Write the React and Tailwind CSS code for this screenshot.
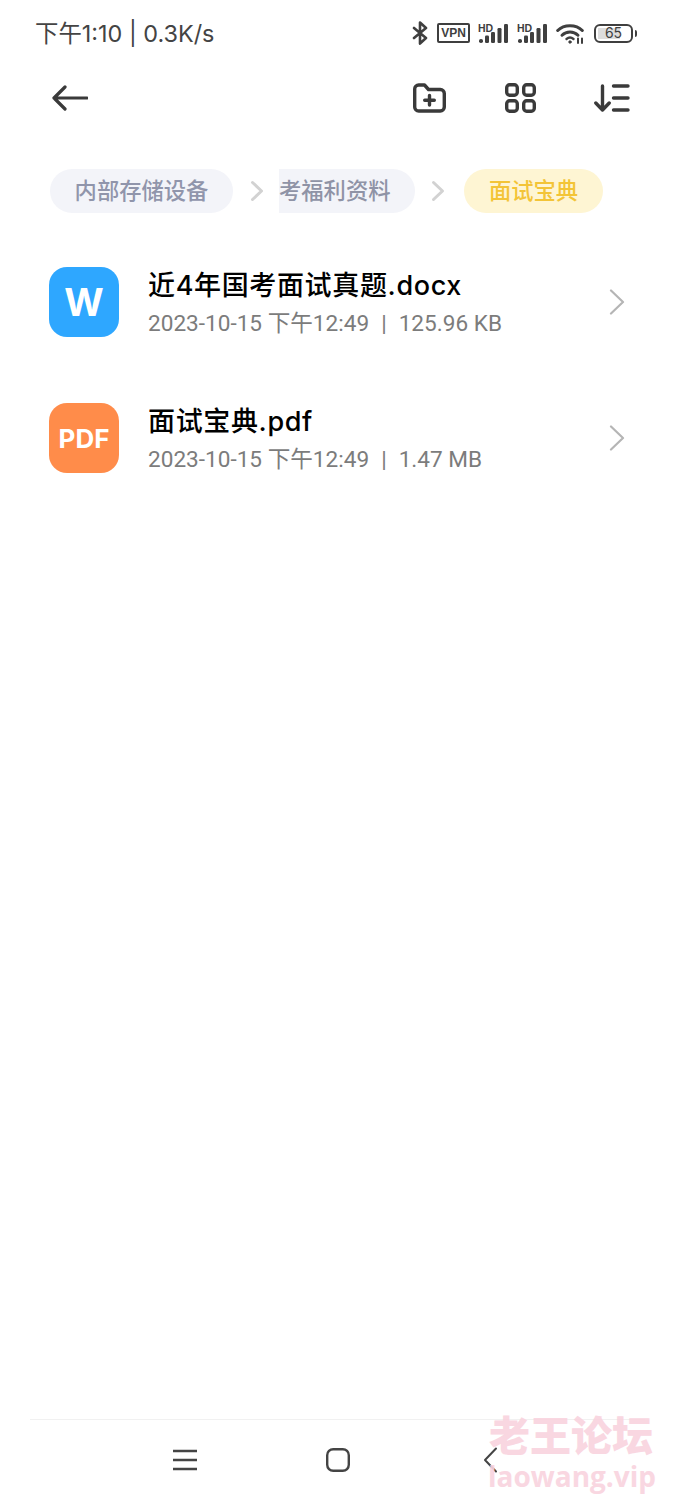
function Bluetooth() {
  return (
    <svg width="16" height="24" viewBox="0 0 16 24" fill="none" stroke="#3f3f3f" strokeWidth="2.6" strokeLinejoin="round" strokeLinecap="round">
      <path d="M2 7 L14 17 L8 22.5 V1.5 L14 7 L2 17" />
    </svg>
  );
}
function Signal() {
  return (
    <svg width="31" height="20" viewBox="0 0 31 20" fill="#3f3f3f">
      <text x="0" y="8.5" fontSize="10.5" fontWeight="700" fontFamily="'Liberation Sans',sans-serif">HD</text>
      <rect x="1" y="16" width="4" height="4" rx="1.8" />
      <rect x="7" y="12.5" width="4" height="7.5" rx="1.2" />
      <rect x="13" y="9" width="4" height="11" rx="1.2" />
      <rect x="19.5" y="5" width="4" height="15" rx="1.2" />
      <rect x="26" y="1" width="4" height="19" rx="1.2" />
    </svg>
  );
}
function Wifi() {
  return (
    <svg width="29" height="21" viewBox="0 0 29 21" fill="none" stroke="#3f3f3f" strokeWidth="3" strokeLinecap="round">
      <path d="M1.7 7.5 C8 1 20 1 26.3 7.5" />
      <path d="M6 12.2 C10.5 7.8 17.5 7.8 22 12.2" />
      <path d="M10.5 16 C12.5 14.4 15.5 14.4 17.5 16" strokeWidth="2.4" />
      <circle cx="14" cy="19" r="1.2" fill="#3f3f3f" strokeWidth="1" />
      <path d="M22 20 V15.5 M26 20 V15.5" strokeWidth="2" />
    </svg>
  );
}
function Crumb() {
  return (
    <svg width="14" height="22" viewBox="0 0 14 22" fill="none" stroke="#d2d2d2" strokeWidth="3" strokeLinecap="round" strokeLinejoin="round">
      <path d="M2.5 2.5 L11.5 11 L2.5 19.5" />
    </svg>
  );
}
function Row({ icon, color, iconSize, title, date, size }) {
  return (
    <div className="flex items-center h-[70px]">
      <div
        className={`w-[70px] h-[70px] rounded-[18px] flex items-center justify-center text-white font-bold ${color} ${iconSize}`}
        style={{ fontFamily: "Inter,sans-serif" }}
      >
        {icon}
      </div>
      <div className="ml-[29px] flex-1 flex flex-col pt-[2px]">
        <div
          className="text-[27px] leading-[36px] font-medium text-black tracking-[0.65px]"
          style={{ fontFamily: "Inter,'Noto Sans CJK SC',sans-serif" }}
        >
          {title}
        </div>
        <div
          className="text-[22.6px] leading-[30px] text-[#7c7c7c] mt-[5px] whitespace-nowrap"
          style={{ fontFamily: "Roboto,'Noto Sans CJK SC',sans-serif" }}
        >
          {date}
          <span className="mx-[12px]">|</span>
          {size}
        </div>
      </div>
      <svg className="mr-[50px]" width="16" height="26" viewBox="0 0 16 26" fill="none" stroke="#b5b5b5" strokeWidth="2.2" strokeLinecap="round" strokeLinejoin="round">
        <path d="M2 1.5 L14 13 L2 24.5" />
      </svg>
    </div>
  );
}
export default function App() {
  return (
    <div className="relative w-[675px] h-[1500px] bg-white flex flex-col overflow-hidden" style={{ fontFamily: "Inter,'Noto Sans CJK SC',sans-serif" }}>
      <div className="h-[66px] flex items-center justify-between pl-[35px] pr-[38px]">
        <span className="text-[23.4px] leading-[30px] text-[#444444] whitespace-nowrap pt-[1px]">下午1:10 | 0.3K/s</span>
        <div className="flex items-center">
          <Bluetooth />
          <div className="ml-[9px] w-[33px] h-[20px] border-2 border-[#3f3f3f] rounded-[2px] flex items-center justify-center text-[12px] font-bold text-[#3f3f3f] leading-none" style={{ fontFamily: "'Liberation Sans',sans-serif" }}>VPN</div>
          <div className="ml-[8px]"><Signal /></div>
          <div className="ml-[8px]"><Signal /></div>
          <div className="ml-[8px]"><Wifi /></div>
          <div className="ml-[9px] flex items-center">
            <div className="relative w-[39px] h-[19px] border-2 border-[#3f3f3f] rounded-[6px] overflow-hidden flex items-center justify-center text-[14px] leading-none text-[#3f3f3f]">
              <div className="absolute left-[2px] top-[2px] bottom-[2px] w-[22px] bg-[#dddddd]" />
              <span className="relative">65</span>
            </div>
            <div className="ml-[2px] w-[2px] h-[7px] bg-[#3f3f3f] rounded-r-sm" />
          </div>
        </div>
      </div>
      <div className="h-[64px] flex items-center pl-[52px] pr-[45px]">
        <svg width="36" height="26" viewBox="0 0 36 26" fill="none" stroke="#3a3a3a" strokeWidth="3.2" strokeLinecap="round" strokeLinejoin="round">
          <path d="M35 13 H2 M13 2 L2 13 L13 24" />
        </svg>
        <div className="ml-auto flex items-center">
          <svg width="33" height="30" viewBox="0 0 33 30" fill="none" stroke="#3a3a3a" strokeWidth="3.4" strokeLinecap="round" strokeLinejoin="round">
            <path d="M1.7 6 A4 4 0 0 1 5.7 2 H11.5 L15.5 6.5 H27.3 A4 4 0 0 1 31.3 10.5 V24 A4 4 0 0 1 27.3 28 H5.7 A4 4 0 0 1 1.7 24 Z" />
            <path d="M16.5 12.5 V22 M11.7 17.2 H21.3" />
          </svg>
          <svg className="ml-[59px]" width="31" height="30" viewBox="0 0 31 30" fill="none" stroke="#3a3a3a" strokeWidth="3.4">
            <rect x="1.7" y="1.7" width="10.6" height="10.6" rx="3" />
            <rect x="18.7" y="1.7" width="10.6" height="10.6" rx="3" />
            <rect x="1.7" y="17.7" width="10.6" height="10.6" rx="3" />
            <rect x="18.7" y="17.7" width="10.6" height="10.6" rx="3" />
          </svg>
          <svg className="ml-[58px]" width="36" height="28" viewBox="0 0 36 28" fill="none" stroke="#3a3a3a" strokeWidth="3.4" strokeLinecap="round" strokeLinejoin="round">
            <path d="M8.5 2 V26 M1.8 19 L8.5 26 L15.2 19" />
            <path d="M19.5 2 H34 M19.5 14 H34 M19.5 26 H34" />
          </svg>
        </div>
      </div>
      <div className="mt-[39px] h-[44px] flex items-center pl-[50px] text-[22.3px] leading-[30px] font-medium">
        <div className="w-[183px] h-[44px] pb-[1px] rounded-full bg-[#f3f4f9] text-[#9095ab] flex items-center justify-center whitespace-nowrap">内部存储设备</div>
        <div className="ml-[17px]"><Crumb /></div>
        <div className="ml-[15px] w-[136px] h-[44px] pb-[1px] rounded-r-full bg-[#f3f4f9] text-[#8f93a6] flex items-center whitespace-nowrap">考福利资料</div>
        <div className="ml-[16px]"><Crumb /></div>
        <div className="ml-[19px] w-[139px] h-[44px] pb-[1px] rounded-full bg-[#fef5d3] text-[#f3c437] flex items-center justify-center whitespace-nowrap">面试宝典</div>
      </div>
      <div className="mt-[54px] pl-[49px] flex flex-col gap-[66px]">
        <Row icon="W" color="bg-[#2ea7ff]" iconSize="text-[38px]" title="近4年国考面试真题.docx" date="2023-10-15 下午12:49" size="125.96 KB" />
        <Row icon="PDF" color="bg-[#ff8c4a]" iconSize="text-[26px]" title="面试宝典.pdf" date="2023-10-15 下午12:49" size="1.47 MB" />
      </div>
      <div className="mt-auto mx-[30px] h-[81px] border-t border-[#f1f1f1] flex items-center pb-[1px]">
        <svg className="ml-[143px]" width="24" height="22" viewBox="0 0 24 22" fill="none" stroke="#444444" strokeWidth="2.4">
          <path d="M0 2 H24 M0 11 H24 M0 20 H24" />
        </svg>
        <svg className="ml-[129px]" width="24" height="24" viewBox="0 0 24 24" fill="none" stroke="#444444" strokeWidth="2.4">
          <rect x="1.2" y="1.2" width="21.6" height="21.6" rx="6" />
        </svg>
        <svg className="ml-[133px]" width="15" height="26" viewBox="0 0 15 26" fill="none" stroke="#444444" strokeWidth="2" strokeLinecap="round" strokeLinejoin="round">
          <path d="M13 1.5 L2 13 L13 24.5" />
        </svg>
      </div>
      <div className="absolute left-[486px] top-[1411px] w-[170px] flex flex-col items-center text-[#f9d3de] font-bold pointer-events-none opacity-90" style={{ fontFamily: "'Noto Sans CJK SC',sans-serif" }}>
        <span className="text-[41px] leading-[44px] font-black whitespace-nowrap">老王论坛</span>
        <span className="text-[28px] leading-[32px] mt-[5px] ml-[2px] whitespace-nowrap" style={{ fontFamily: "'Open Sans',sans-serif" }}>laowang.vip</span>
      </div>
    </div>
  );
}
